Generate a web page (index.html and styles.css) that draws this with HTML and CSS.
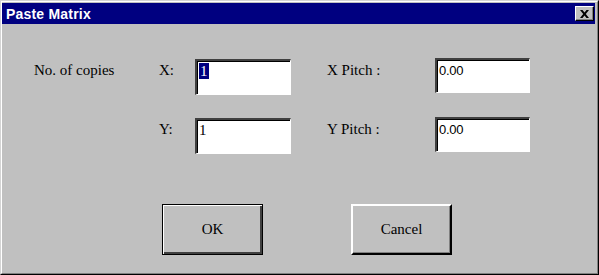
FILE: index.html
```html
<!DOCTYPE html>
<html>
<head>
<meta charset="utf-8">
<link rel="stylesheet" href="styles.css">
</head>
<body>
<div class="window">
  <div class="frame">
    <div class="titlebar">
      <span class="title">Paste Matrix</span>
      <span class="close"><svg width="9" height="8" viewBox="0 0 9 8"><path d="M0 0h2.5l2 2.5 2-2.5h2.5l-3.2 4 3.2 4h-2.5l-2-2.5-2 2.5h-2.5l3.2-4z" fill="#000"/></svg></span>
    </div>
    <div class="content">
      <div class="grid">
        <span class="label">No. of copies</span>
        <span class="label">X:</span>
        <div class="field"><span class="sel">1</span></div>
        <span class="label pitch">X Pitch :</span>
        <div class="field num">0.00</div>

        <span></span>
        <span class="label">Y:</span>
        <div class="field">1</div>
        <span class="label pitch">Y Pitch :</span>
        <div class="field num">0.00</div>
      </div>
      <div class="buttons">
        <button class="btn default">OK</button>
        <button class="btn">Cancel</button>
      </div>
    </div>
  </div>
</div>
</body>
</html>
```
FILE: styles.css
```css
html, body {
  margin: 0;
  padding: 0;
  background: #c0c0c0;
}
.window {
  width: 599px;
  height: 275px;
  box-sizing: border-box;
  border-style: solid;
  border-width: 1px;
  border-color: #d4d4d4 #000 #000 #d4d4d4;
  background: #c0c0c0;
}
.frame {
  height: 100%;
  box-sizing: border-box;
  border-style: solid;
  border-width: 1px;
  border-color: #fff #808080 #808080 #fff;
  padding: 1px 2px 2px 0;
  display: flex;
  flex-direction: column;
}
.titlebar {
  height: 21px;
  background: #000080;
  display: flex;
  align-items: center;
  justify-content: space-between;
  padding: 0 1px 0 4px;
}
.title {
  color: #fff;
  font-family: "Liberation Sans", Arial, sans-serif;
  font-weight: bold;
  font-size: 14px;
  letter-spacing: 0.2px;
}
.close {
  width: 19px;
  height: 15px;
  box-sizing: border-box;
  background: #c0c0c0;
  border-style: solid;
  border-width: 1px;
  border-color: #fff #000 #000 #fff;
  box-shadow: inset -1px -1px 0 #808080;
  display: flex;
  align-items: center;
  justify-content: center;
}
.content {
  flex: 1;
  padding: 35px 0 0 32px;
  font-family: "Liberation Serif", "Times New Roman", serif;
  font-size: 15px;
  color: #000;
}
.grid {
  display: grid;
  grid-template-columns: 125px 36px 96px 36px 108px 95px;
  grid-template-rows: 36px 36px;
  row-gap: 23px;
}
.label {
  padding-top: 3px;
  line-height: 17px;
}
.grid > :nth-child(4), .grid > :nth-child(9) { grid-column: 5; }
.grid > :nth-child(5), .grid > :nth-child(10) { grid-column: 6; }
.field {
  box-sizing: border-box;
  background: #fff;
  border-style: solid;
  border-width: 2px 1px 1px 2px;
  border-color: #404040 #fff #fff #404040;
  box-shadow: inset 1px 1px 0 #000;
  padding: 2px 0 0 2px;
  font-size: 15px;
  line-height: 16px;
}
.field.num {
  font-family: "Liberation Sans Narrow", "Liberation Sans", Arial, sans-serif;
  font-size: 13px;
  padding-top: 3px;
  letter-spacing: -0.3px;
  margin-top: -1px;
  height: 35px;
}
.sel {
  background: #000080;
  color: #fff;
  padding: 0 1px;
}
.buttons {
  display: flex;
  gap: 88px;
  padding: 50px 0 0 128px;
}
.btn {
  width: 101px;
  height: 51px;
  box-sizing: border-box;
  font-family: "Liberation Serif", "Times New Roman", serif;
  font-size: 15px;
  color: #000;
  background: #c0c0c0;
  border-style: solid;
  border-width: 2px;
  border-color: #fff #000 #000 #fff;
  box-shadow: inset -1px -1px 0 #808080;
  padding: 0;
  margin: 0;
}
.btn.default {
  border: 1px solid #000;
  box-shadow: inset 1px 1px 0 #fff, inset -2px -2px 0 #404040, inset -1px -1px 0 #000;
}
```
